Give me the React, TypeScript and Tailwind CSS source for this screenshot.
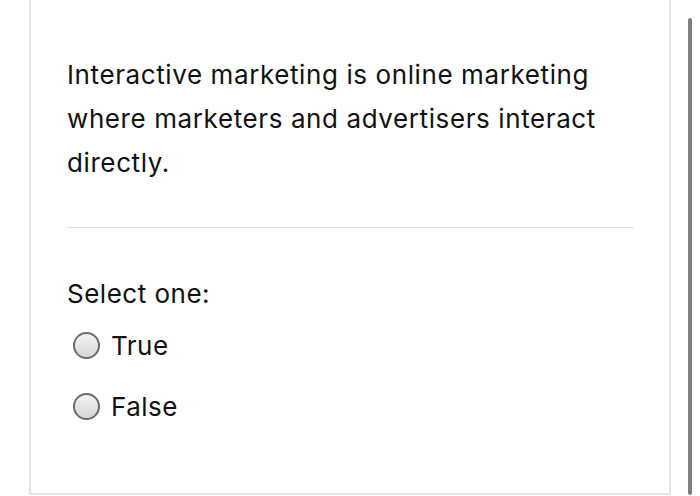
import React from 'react';

const Radio = ({ label }: { label: string }) => (
  <label className="flex items-center gap-[11px] h-[61px]">
    <span className="w-[27px] h-[27px] rounded-full border-[2px] border-[#6b6b6b] bg-gradient-to-b from-[#f4f4f4] to-[#d6d6d6] shrink-0" />
    <span className="text-[26px] tracking-[0.5px] text-[#111]">{label}</span>
  </label>
);

export default function App() {
  return (
    <div className="w-[700px] h-[496px] bg-white relative overflow-hidden font-['Inter',sans-serif]">
      <div className="absolute left-[29px] top-[-10px] w-[642px] h-[505px] border-2 border-[#e6e6e6] bg-white">
        <div className="pl-[36px] pr-[36px] pt-[61px]">
          <p className="text-[26px] tracking-[0.6px] leading-[44px] text-[#111] max-w-[545px]">
            Interactive marketing is online marketing where marketers and advertisers interact directly.
          </p>
          <div className="h-px bg-[#e4e4e4] mt-[42px] mr-[-1px]" />
          <p className="text-[26px] tracking-[0.5px] text-[#111] mt-[46px]">Select one:</p>
          <div className="mt-[2px] pl-[6px]">
            <Radio label="True" />
            <Radio label="False" />
          </div>
        </div>
      </div>
      <div className="absolute left-[688px] top-[18px] w-[4px] h-[477px] rounded-full bg-[#7f7f7f]" />
    </div>
  );
}
